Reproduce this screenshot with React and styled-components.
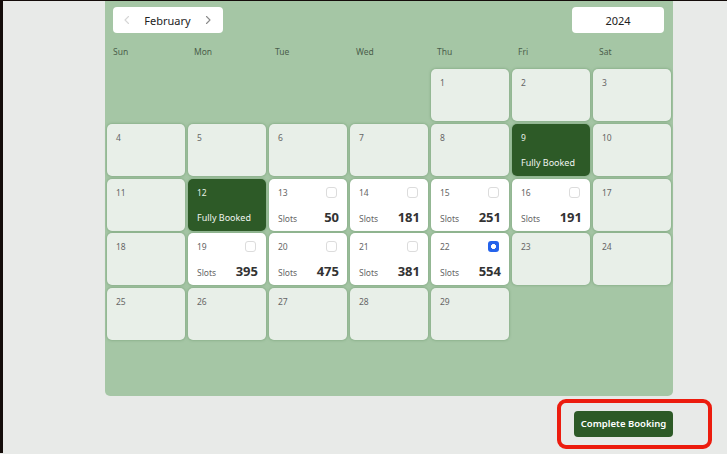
import React, { useState } from 'react';
import styled, { createGlobalStyle } from 'styled-components';

const GlobalStyle = createGlobalStyle`
  html, body {
    margin: 0;
    padding: 0;
    background: #e8eae8;
    font-family: "Noto Sans", "Open Sans", sans-serif;
  }
`;

const days = {
  9: { booked: true },
  12: { booked: true },
  13: { slots: 50 },
  14: { slots: 181 },
  15: { slots: 251 },
  16: { slots: 191 },
  19: { slots: 395 },
  20: { slots: 475 },
  21: { slots: 381 },
  22: { slots: 554 },
};

const weekdays = ['Sun', 'Mon', 'Tue', 'Wed', 'Thu', 'Fri', 'Sat'];

function Chevron({ dir, color }) {
  return (
    <svg width="8" height="10" viewBox="0 0 8 10" fill="none">
      <path
        d={dir === 'left' ? 'M5.5 1.5 L2 5 L5.5 8.5' : 'M2.5 1.5 L6 5 L2.5 8.5'}
        stroke={color}
        strokeWidth="1.1"
        strokeLinecap="round"
        strokeLinejoin="round"
      />
    </svg>
  );
}

export default function App() {
  const [selected, setSelected] = useState(22);

  return (
    <Page>
      <GlobalStyle />
      <Column>
        <Panel>
          <Header>
            <MonthPill>
              <Chevron dir="left" color="#d6d6d6" />
              <PillText>February</PillText>
              <Chevron dir="right" color="#8a8a8a" />
            </MonthPill>
            <YearPill>
              <PillText>2024</PillText>
            </YearPill>
          </Header>
          <Weekdays>
            {weekdays.map((d) => (
              <Weekday key={d}>{d}</Weekday>
            ))}
          </Weekdays>
          <Grid>
            {Array.from({ length: 29 }, (_, i) => {
              const n = i + 1;
              const info = days[n];
              const variant = info ? (info.booked ? 'booked' : 'open') : 'empty';
              return (
                <Cell key={n} $variant={variant} $start={n === 1 ? 5 : undefined}>
                  <CellTop>
                    <DayNum $variant={variant}>{n}</DayNum>
                    {variant === 'open' && (
                      <Check $checked={selected === n} onClick={() => setSelected(n)} />
                    )}
                  </CellTop>
                  {variant === 'booked' && <BookedLabel>Fully Booked</BookedLabel>}
                  {variant === 'open' && (
                    <CellBottom>
                      <SlotsLabel>Slots</SlotsLabel>
                      <SlotsCount>{info.slots}</SlotsCount>
                    </CellBottom>
                  )}
                </Cell>
              );
            })}
          </Grid>
        </Panel>
        <Footer>
          <ButtonWrap>
            <Ring />
            <BookButton>Complete Booking</BookButton>
          </ButtonWrap>
        </Footer>
      </Column>
    </Page>
  );
}

const Page = styled.div`
  min-height: 453px;
  border-top: 1px solid #140c0a;
  border-left: 3px solid #140c0a;
  box-sizing: border-box;
  display: flex;
  padding-left: 102px;
`;

const Column = styled.div`
  width: 568px;
  display: flex;
  flex-direction: column;
`;

const Panel = styled.div`
  background: #a5c6a5;
  height: 395px;
  border-radius: 0 0 5px 5px;
  padding: 6px 2px 0;
  box-sizing: border-box;
`;

const Header = styled.div`
  display: flex;
  justify-content: space-between;
  padding: 0 7px 0 6px;
`;

const PillBase = styled.div`
  background: #ffffff;
  height: 26px;
  border-radius: 4px;
  display: flex;
  align-items: center;
  box-sizing: border-box;
`;

const MonthPill = styled(PillBase)`
  width: 110px;
  justify-content: space-between;
  padding: 0 11px 0 10px;
`;

const YearPill = styled(PillBase)`
  width: 92px;
  justify-content: center;
`;

const PillText = styled.span`
  font-size: 11px;
  color: #222;
`;

const Weekdays = styled.div`
  display: grid;
  grid-template-columns: repeat(7, 78px);
  column-gap: 3px;
  margin-top: 12px;
  height: 24px;
`;

const Weekday = styled.div`
  font-size: 8.5px;
  color: #4b5e4b;
  padding-left: 6px;
  line-height: 14px;
`;

const Grid = styled.div`
  display: grid;
  grid-template-columns: repeat(7, 78px);
  grid-auto-rows: 52px;
  column-gap: 3px;
  row-gap: 2.75px;
`;

const cellBg = {
  empty: '#e8efe8',
  open: '#ffffff',
  booked: '#2d5a27',
};

const Cell = styled.div`
  grid-column-start: ${(p) => p.$start || 'auto'};
  background: ${(p) => cellBg[p.$variant]};
  border-radius: 5px;
  box-shadow: 0 0 2px 1px rgba(120, 160, 120, 0.5);
  display: flex;
  flex-direction: column;
  justify-content: space-between;
  padding: 7px 8px 5px 9px;
  box-sizing: border-box;
`;

const CellTop = styled.div`
  display: flex;
  justify-content: space-between;
  align-items: flex-start;
`;

const DayNum = styled.span`
  font-size: 8.5px;
  line-height: 14px;
  color: ${(p) => (p.$variant === 'booked' ? '#e6efe6' : '#666')};
`;

const Check = styled.span`
  width: 11px;
  height: 11px;
  border-radius: 3px;
  box-sizing: border-box;
  margin-top: 1px;
  margin-right: 2px;
  cursor: pointer;
  border: ${(p) => (p.$checked ? 'none' : '1px solid #dcdcdc')};
  background: ${(p) =>
    p.$checked
      ? 'radial-gradient(circle, #ffffff 0 2.2px, #2563eb 2.7px)'
      : '#ffffff'};
`;

const BookedLabel = styled.span`
  font-size: 9px;
  color: #f0f5f0;
  line-height: 14px;
  margin-bottom: 1px;
`;

const CellBottom = styled.div`
  display: flex;
  justify-content: space-between;
  align-items: baseline;
`;

const SlotsLabel = styled.span`
  font-size: 8.5px;
  color: #666;
`;

const SlotsCount = styled.span`
  font-size: 13px;
  font-weight: 700;
  color: #333;
`;

const Footer = styled.div`
  display: flex;
  justify-content: flex-end;
  margin-top: 14px;
`;

const ButtonWrap = styled.div`
  position: relative;
`;

const Ring = styled.span`
  position: absolute;
  left: -17px;
  top: -11px;
  width: 155px;
  height: 50px;
  border: 4px solid #ec1c0e;
  border-radius: 9px;
  box-sizing: border-box;
  pointer-events: none;
`;

const BookButton = styled.button`
  width: 99px;
  height: 26px;
  border: none;
  border-radius: 4px;
  background: #2d5a27;
  color: #ffffff;
  font-family: "Noto Sans", "Open Sans", sans-serif;
  font-size: 9.5px;
  font-weight: 600;
  padding: 0;
  cursor: pointer;
`;
